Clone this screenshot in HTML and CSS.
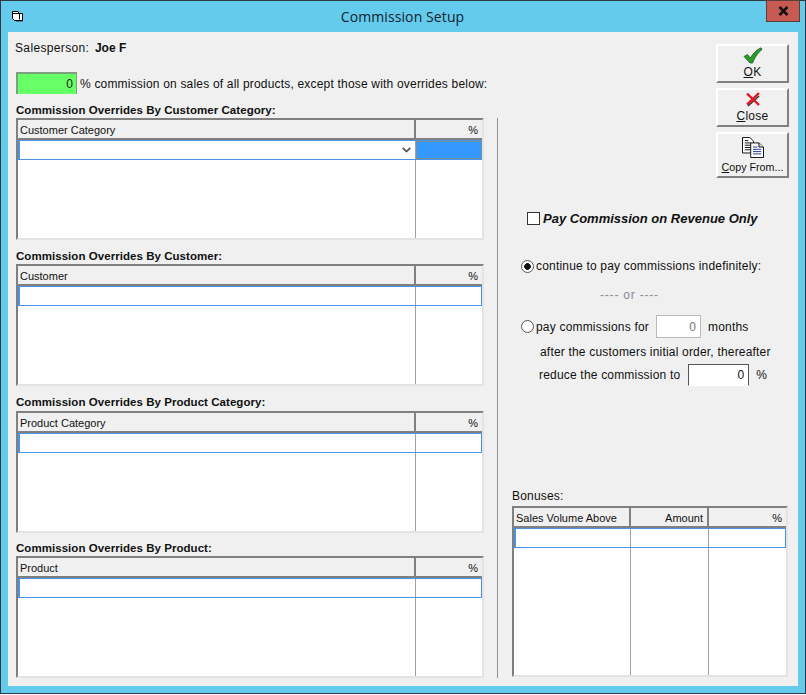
FILE: index.html
```html
<!DOCTYPE html>
<html lang="en">

<head>
  <meta charset="UTF-8">
  <meta name="viewport" content="width=device-width, initial-scale=1.0">
  <title>Commission Setup</title>
  <link rel="stylesheet" href="styles.css">
</head>

<body>
  <div class="window">
    <div class="titlebar">
      <svg class="app-icon" width="14" height="14" viewBox="0 0 14 14">
        <path d="M2.500 1.500H8L9 3.500H12.500V10.500H4.500L2.500 8.500Z" fill="#fff" stroke="#000" />
        <path d="M2.500 3.500H9.500V9.500" fill="none" stroke="#000" />
        <path d="M13 11.500H6" stroke="#5a7f90" />
      </svg>
      <div class="title">Commission Setup</div>
      <div class="close-x">
        <svg width="13" height="10" viewBox="0 0 13 10">
          <path d="M2.500 1L10.500 9M10.500 1L2.500 9" stroke="#111" stroke-width="2.600" />
        </svg>
      </div>
    </div>

    <div class="client">
      <div class="left">
        <div class="salesperson">Salesperson: <b>Joe F</b></div>
        <div class="rate">
          <input class="rate-input" type="text" value="0">
          <span>% commission on sales of all products, except those with overrides below:</span>
        </div>

        <div class="section">
          <div class="section-label">Commission Overrides By Customer Category:</div>
          <div class="grid">
            <div class="grid-head">
              <div class="th wide">Customer Category</div>
              <div class="th pct">%</div>
            </div>
            <div class="grid-row focused">
              <div class="td wide">
                <svg class="chevron" width="9" height="6" viewBox="0 0 9 6">
                  <path d="M.7 .8L4.500 4.600L8.300 .8" fill="none" stroke="#555" stroke-width="1.800" />
                </svg>
              </div>
              <div class="td pct selected"></div>
            </div>
            <div class="grid-fill">
              <div class="td wide"></div>
              <div class="td pct"></div>
            </div>
          </div>
        </div>

        <div class="section">
          <div class="section-label">Commission Overrides By Customer:</div>
          <div class="grid">
            <div class="grid-head">
              <div class="th wide">Customer</div>
              <div class="th pct">%</div>
            </div>
            <div class="grid-row">
              <div class="td wide"></div>
              <div class="td pct"></div>
            </div>
            <div class="grid-fill">
              <div class="td wide"></div>
              <div class="td pct"></div>
            </div>
          </div>
        </div>

        <div class="section third">
          <div class="section-label">Commission Overrides By Product Category:</div>
          <div class="grid">
            <div class="grid-head">
              <div class="th wide">Product Category</div>
              <div class="th pct">%</div>
            </div>
            <div class="grid-row">
              <div class="td wide"></div>
              <div class="td pct"></div>
            </div>
            <div class="grid-fill">
              <div class="td wide"></div>
              <div class="td pct"></div>
            </div>
          </div>
        </div>

        <div class="section fourth">
          <div class="section-label">Commission Overrides By Product:</div>
          <div class="grid">
            <div class="grid-head">
              <div class="th wide">Product</div>
              <div class="th pct">%</div>
            </div>
            <div class="grid-row">
              <div class="td wide"></div>
              <div class="td pct"></div>
            </div>
            <div class="grid-fill">
              <div class="td wide"></div>
              <div class="td pct"></div>
            </div>
          </div>
        </div>
      </div>

      <div class="divider"></div>

      <div class="right">
        <div class="buttons">
          <button class="btn ok">
            <svg width="20" height="17" viewBox="0 0 20 17">
              <path d="M1 9.500L4.500 7.500L7.500 11C9.500 7 13 3 18 .8L19 2.500C15 5.500 12 10 9.500 16H7Z" fill="#2c9a2c" stroke="#1c5f1c" stroke-width=".8" />
            </svg>
            <span><u>O</u>K</span>
          </button>
          <button class="btn close">
            <svg width="16" height="15" viewBox="0 0 16 15">
              <path d="M3 14L14 4" stroke="#333" stroke-width="1.600" />
              <path d="M2 1.500L14 13M14 1L2 12.500" stroke="#e8101a" stroke-width="2.400" />
            </svg>
            <span><u>C</u>lose</span>
          </button>
          <button class="btn copy">
            <svg width="22" height="21" viewBox="0 0 24 23">
              <path d="M.5 .5H8.500L12.500 4.500V17.500H.5Z" fill="#fff" stroke="#000" />
              <path d="M3 4H7M3 6.500H10M3 9H10M3 11.500H10M3 14H10" stroke="#000" />
              <path d="M9.500 6.500H18.500L23.500 11V22.500H9.500Z" fill="#fff" stroke="#000" />
              <path d="M18.500 6.500V11H23.500" fill="#cfe0f5" stroke="#000" />
              <path d="M12 11H17M12 13.500H21M12 16H21M12 18.500H21" stroke="#1a2a8a" />
            </svg>
            <span><u>C</u>opy From...</span>
          </button>
        </div>

        <label class="revenue">
          <input class="check" type="checkbox">
          <span>Pay Commission on Revenue Only</span>
        </label>

        <label class="option first-option">
          <input class="radio" type="radio" name="term" checked>
          <span>continue to pay commissions indefinitely:</span>
        </label>
        <div class="or">---- or ----</div>
        <div class="option months">
          <input class="radio" type="radio" name="term">
          <span>pay commissions for</span>
          <input class="small-input muted" type="text" value="0">
          <span class="after">months</span>
        </div>
        <div class="line-after">after the customers initial order, thereafter</div>
        <div class="line-reduce">
          <span>reduce the commission to</span>
          <input class="small-input reduce" type="text" value="0">
          <span class="after">%</span>
        </div>

        <div class="bonus-label">Bonuses:</div>
        <div class="grid bonus">
          <div class="grid-head">
            <div class="th col-sales">Sales Volume Above</div>
            <div class="th col-amount">Amount</div>
            <div class="th col-pct">%</div>
          </div>
          <div class="grid-row">
            <div class="td col-sales"></div>
            <div class="td col-amount"></div>
            <div class="td col-pct"></div>
          </div>
          <div class="grid-fill">
            <div class="td col-sales"></div>
            <div class="td col-amount"></div>
            <div class="td col-pct"></div>
          </div>
        </div>
      </div>
    </div>
  </div>
</body>

</html>
```

FILE: styles.css
```css
* {
  margin: 0;
  padding: 0;
  box-sizing: border-box;
}

body {
  background: #fff;
  font-family: "Liberation Sans", Arial, sans-serif;
  font-size: 12px;
  letter-spacing: .19px;
  color: #111;
}

.window {
  width: 806px;
  height: 694px;
  background: #65cbec;
  border: 1px solid #2f3a42;
  padding: 0 7px 7px;
}

.titlebar {
  display: flex;
  align-items: flex-start;
  height: 31px;
  margin-left: -7px;
  margin-right: -7px;
  padding-left: 9px;
  padding-right: 5px;
}

.app-icon {
  margin-top: 9px;
}

.title {
  flex: 1;
  text-align: center;
  font-family: "Open Sans", sans-serif;
  font-size: 14px;
  letter-spacing: .1px;
  line-height: 31px;
  padding-left: 44px;
  padding-right: 29px;
  color: #10222c;
}

.close-x {
  width: 34px;
  height: 22px;
  margin-top: -1px;
  background: #c75b52;
  border: 1px solid #5b3d3a;
  display: flex;
  align-items: center;
  justify-content: center;
}

.client {
  display: flex;
  height: 654px;
  background: #f0f0f0;
}

.left {
  width: 489px;
  padding-left: 8px;
}

.salesperson {
  height: 14px;
  line-height: 14px;
  margin-top: 9px;
  margin-left: -1px;
  letter-spacing: .35px;
}

.salesperson b {
  margin-left: 2px;
  letter-spacing: 0;
}

.rate {
  display: flex;
  align-items: center;
  margin-top: 17px;
  white-space: nowrap;
}

.rate span {
  margin-left: 3px;
  margin-top: 2px;
}

.rate-input {
  width: 61px;
  height: 22px;
  background: #66ff66;
  border: 0;
  border-top: 2px solid #7f9f7f;
  border-left: 2px solid #7f9f7f;
  border-right: 1px solid #7f9f7f;
  text-align: right;
  padding-right: 3px;
  font: 12px "Liberation Sans", Arial, sans-serif;
  color: #222;
}

.section {
  margin-top: 9px;
}

.third .section-label {
  height: 16px;
}

.fourth {
  margin-top: 8px;
}

.section-label {
  font-weight: bold;
  font-size: 11.500px;
  letter-spacing: .05px;
  height: 15px;
  line-height: 15px;
  white-space: nowrap;
}

.grid {
  display: flex;
  flex-direction: column;
  width: 468px;
  height: 122px;
  background: #fff;
  border-top: 2px solid #808080;
  border-left: 2px solid #808080;
  border-right: 2px solid #e3e3e3;
  border-bottom: 2px solid #e3e3e3;
}

.grid-head {
  display: flex;
  height: 20px;
  background: #f0f0f0;
  border-bottom: 2px solid #808080;
  flex-shrink: 0;
}

.th {
  line-height: 20px;
  padding: 0 4px 0 2px;
  font-size: 11px;
  letter-spacing: 0;
  white-space: nowrap;
}

.wide {
  width: 398px;
}

.pct {
  flex: 1;
}

.th.wide {
  border-right: 2px solid #808080;
}

.th.pct,
.th.col-amount,
.th.col-pct {
  text-align: right;
}

.grid-row {
  display: flex;
  height: 20px;
  border: 1px solid #4a94e6;
  border-width: 1px 1px 1px 2px;
  flex-shrink: 0;
}

.grid-fill {
  display: flex;
  flex: 1;
}

.td {
  height: 100%;
}

.td.wide,
.td.col-sales,
.td.col-amount {
  border-right: 1px solid #a0a0a0;
}

.grid-row .td.wide {
  width: 396px;
}

.focused .wide {
  display: flex;
  align-items: center;
  justify-content: flex-end;
  padding-right: 4px;
}

.chevron {
  display: block;
}

.selected {
  background: #3399ff;
  border: 1px dotted #b0864a;
  margin-right: -1px;
}

.divider {
  width: 1px;
  height: 560px;
  margin-top: 86px;
  background: #909090;
}

.right {
  flex: 1;
  padding-left: 14px;
}

.buttons {
  display: flex;
  flex-direction: column;
  align-items: flex-end;
  gap: 5px;
  margin-top: 12px;
  padding-right: 9px;
}

.btn {
  width: 73px;
  height: 39px;
  background: #f0f0f0;
  border-top: 2px solid #fff;
  border-left: 2px solid #fff;
  border-right: 2px solid #808080;
  border-bottom: 2px solid #808080;
  font: 12px "Liberation Sans", Arial, sans-serif;
  letter-spacing: .3px;
  color: #111;
  display: flex;
  flex-direction: column;
  align-items: center;
  justify-content: flex-start;
  line-height: 13px;
}

.btn svg {
  display: block;
}

.ok svg {
  margin-top: 1px;
}

.ok span {
  margin-top: 2px;
}

.close svg {
  margin-top: 2px;
}

.close span {
  margin-top: 3px;
}

.btn.copy {
  height: 46px;
  font-size: 10.700px;
  letter-spacing: 0;
}

.btn.copy svg {
  margin-top: 3px;
  margin-bottom: 3px;
}

.revenue {
  display: flex;
  align-items: center;
  margin-top: 32px;
  margin-left: 15px;
  font-size: 13px;
  font-weight: bold;
  font-style: italic;
  letter-spacing: 0;
  height: 16px;
  white-space: nowrap;
}

.revenue span {
  margin-left: 3px;
}

.check {
  appearance: none;
  width: 13px;
  height: 13px;
  background: #fff;
  border: 1px solid #333;
}

.option {
  display: flex;
  align-items: center;
  height: 16px;
  white-space: nowrap;
}

.first-option {
  margin-top: 32px;
  margin-left: 9px;
}

.radio {
  appearance: none;
  width: 13px;
  height: 13px;
  border-radius: 50%;
  background: #fff;
  border: 1px solid #555;
  margin-right: 2px;
  flex-shrink: 0;
}

.radio:checked {
  background: radial-gradient(circle, #111 0, #111 3px, #fff 3.600px);
}

.or {
  margin-top: 14px;
  margin-left: 88px;
  height: 14px;
  line-height: 14px;
  letter-spacing: .8px;
  color: #8a8a96;
}

.months {
  height: 23px;
  margin-top: 13px;
  margin-left: 9px;
}

.small-input {
  height: 23px;
  background: #fff;
  border: 1px solid #b9b9b9;
  text-align: right;
  padding-right: 4px;
  font: 12px "Liberation Sans", Arial, sans-serif;
  color: #222;
}

.muted {
  width: 45px;
  margin-left: 7px;
  color: #777;
}

.after {
  margin-left: 7px;
}

.line-after {
  margin-top: 7px;
  margin-left: 28px;
  height: 14px;
  line-height: 14px;
  white-space: nowrap;
}

.line-reduce {
  display: flex;
  align-items: center;
  height: 22px;
  margin-top: 5px;
  margin-left: 27px;
  white-space: nowrap;
}

.reduce {
  width: 61px;
  height: 22px;
  margin-left: 8px;
  border-color: #555 #555 transparent #555;
  color: #111;
}

.bonus-label {
  margin-top: 103px;
  height: 17px;
  line-height: 14px;
}

.bonus {
  width: 276px;
  height: 171px;
}

.col-sales {
  width: 117px;
  flex-shrink: 0;
}

.col-amount {
  width: 78px;
  flex-shrink: 0;
}

.col-pct {
  flex: 1;
}

.grid-row .col-sales {
  width: 115px;
}

.th.col-sales,
.th.col-amount {
  border-right: 2px solid #808080;
}
```
